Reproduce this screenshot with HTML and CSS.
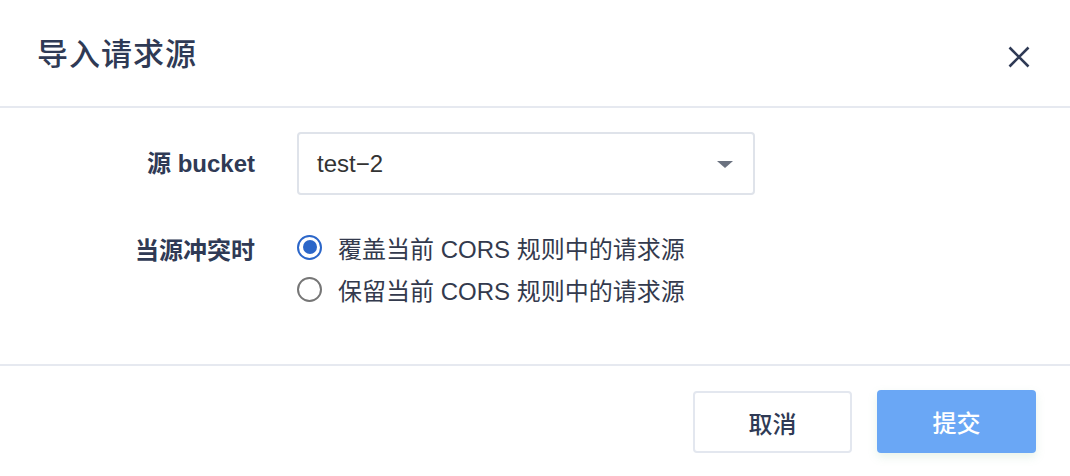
FILE: index.html
```html
<!DOCTYPE html>
<html lang="zh-CN">
<head>
<meta charset="utf-8">
<title>导入请求源</title>
<link rel="stylesheet" href="styles.css">
</head>
<body>
<div class="dialog">
  <header class="dialog-header">
    <h1 class="dialog-title">导入请求源</h1>
    <button class="close-btn" aria-label="关闭">
      <svg width="22" height="22" viewBox="0 0 22 22"><path d="M1.5 1.5 L20.5 20.5 M20.5 1.5 L1.5 20.5" stroke="#2f3a55" stroke-width="2.6" stroke-linecap="butt" fill="none"/></svg>
    </button>
  </header>
  <main class="dialog-body">
    <div class="form-row">
      <label class="form-label label-select">源 bucket</label>
      <div class="select">
        <span class="select-value">test−2</span>
        <span class="caret"></span>
      </div>
    </div>
    <div class="form-row row-radio">
      <label class="form-label label-radio">当源冲突时</label>
      <div class="radio-group">
        <div class="radio-item"><span class="radio checked"></span><span class="radio-text">覆盖当前 CORS 规则中的请求源</span></div>
        <div class="radio-item"><span class="radio"></span><span class="radio-text">保留当前 CORS 规则中的请求源</span></div>
      </div>
    </div>
  </main>
  <footer class="dialog-footer">
    <button class="btn btn-cancel">取消</button>
    <button class="btn btn-submit">提交</button>
  </footer>
</div>
</body>
</html>
```
FILE: styles.css
```css
* { box-sizing: border-box; }
html, body { margin: 0; padding: 0; background: #fff; }
body {
  font-family: "Liberation Sans", "Noto Sans CJK SC", sans-serif;
  width: 1070px;
  height: 476px;
  overflow: hidden;
}
.dialog { width: 1070px; height: 476px; display: flex; flex-direction: column; }
.dialog-header {
  height: 108px;
  border-bottom: 2px solid #e6e9f0;
  display: flex;
  align-items: center;
  justify-content: space-between;
  padding: 0 40px 0 37px;
}
.dialog-title {
  margin: 0;
  margin-top: -4px;
  font-size: 31px;
  font-weight: 500;
  color: #2f3a55;
  font-family: "Noto Sans CJK SC", sans-serif;
  letter-spacing: 1px;
}
.close-btn {
  border: 0;
  background: none;
  padding: 0;
  width: 22px;
  height: 22px;
  margin-top: 8px;
  display: flex;
}
.dialog-body {
  height: 256px;
  padding-top: 24px;
}
.form-row {
  display: grid;
  grid-template-columns: 255px 458px;
  column-gap: 42px;
}
.form-label {
  text-align: right;
  font-size: 24px;
  font-weight: 700;
  color: #2f3a55;
}
.label-select { line-height: 63px; }
.select {
  height: 63px;
  border: 2px solid #dfe3ea;
  border-radius: 4px;
  display: flex;
  align-items: center;
  justify-content: space-between;
  padding: 0 20px 0 18px;
}
.select-value { font-size: 24px; color: #333; }
.caret {
  width: 0; height: 0;
  border-left: 8px solid transparent;
  border-right: 8px solid transparent;
  border-top: 7px solid #6b7280;
  margin-top: 2px;
}
.row-radio { margin-top: 31px; }
.label-radio { line-height: 42px; padding-top: 4px; }
.radio-group { display: flex; flex-direction: column; }
.radio-item { display: flex; align-items: center; height: 42px; }
.radio {
  width: 25px; height: 25px;
  border-radius: 50%;
  border: 2px solid #767676;
  margin-right: 16px;
  display: flex;
  align-items: center;
  justify-content: center;
  flex: none;
}
.radio.checked { border: 2.5px solid #2b66c9; }
.radio.checked::after {
  content: "";
  width: 14px; height: 14px;
  border-radius: 50%;
  background: #2b66c9;
}
.radio-text { font-size: 24px; color: #333a4d; }
.dialog-footer {
  flex: 1;
  border-top: 2px solid #e6e9f0;
  display: flex;
  justify-content: flex-end;
  align-items: flex-start;
  gap: 25px;
  padding: 24px 34px 0 0;
}
.btn {
  width: 159px;
  height: 63px;
  border-radius: 4px;
  font-size: 24px;
  font-family: "Noto Sans CJK SC", sans-serif;
  font-weight: 500;
  cursor: pointer;
}
.btn-cancel {
  background: #fff;
  border: 2px solid #e3e7ef;
  color: #2f3a55;
  margin-top: 1px;
  height: 62px;
}
.btn-submit {
  background: #6aa7f5;
  border: 0;
  color: #fff;
  box-shadow: 0 4px 10px rgba(120, 190, 140, 0.18);
}
```
